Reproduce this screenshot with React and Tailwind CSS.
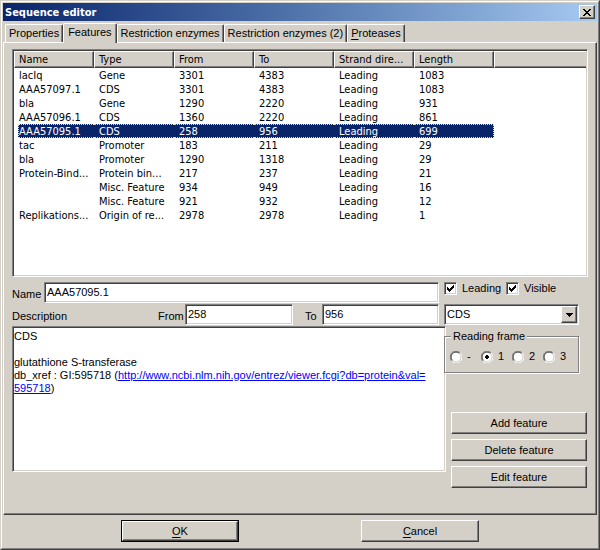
import { useState } from 'react'
import clsx from 'clsx'

const TABS = [
  { id: 'properties', label: 'Properties' },
  { id: 'features', label: 'Features' },
  { id: 'enzymes', label: 'Restriction enzymes' },
  { id: 'enzymes2', label: 'Restriction enzymes (2)' },
  { id: 'proteases', label: 'Proteases', hotkey: true },
]

const COLUMNS = ['Name', 'Type', 'From', 'To', 'Strand dire...', 'Length']

const FEATURES = [
  ['lacIq', 'Gene', '3301', '4383', 'Leading', '1083'],
  ['AAA57097.1', 'CDS', '3301', '4383', 'Leading', '1083'],
  ['bla', 'Gene', '1290', '2220', 'Leading', '931'],
  ['AAA57096.1', 'CDS', '1360', '2220', 'Leading', '861'],
  ['AAA57095.1', 'CDS', '258', '956', 'Leading', '699'],
  ['tac', 'Promoter', '183', '211', 'Leading', '29'],
  ['bla', 'Promoter', '1290', '1318', 'Leading', '29'],
  ['Protein-Bind...', 'Protein bin...', '217', '237', 'Leading', '21'],
  ['', 'Misc. Feature', '934', '949', 'Leading', '16'],
  ['', 'Misc. Feature', '921', '932', 'Leading', '12'],
  ['Replikations...', 'Origin of re...', '2978', '2978', 'Leading', '1'],
]

const raised =
  'border border-t-white border-l-white border-r-[#404040] border-b-[#404040] shadow-[inset_-1px_-1px_0_#808080]'
const sunken =
  'border border-t-[#808080] border-l-[#808080] border-r-white border-b-white bg-white'
const sunkenField =
  'w-full h-[21px] appearance-none rounded-none outline-none pl-[2px] pb-px shadow-[inset_1px_1px_0_#404040,inset_-1px_-1px_0_#d4d0c8]'

function Hotkey({ text }) {
  return (
    <>
      <span className="underline underline-offset-2">{text[0]}</span>
      {text.slice(1)}
    </>
  )
}

function PushButton({ children, className = 'h-[22px]' }) {
  return (
    <button type="button" className={clsx('bg-[#d4d0c8] text-center', raised, className)}>
      {children}
    </button>
  )
}

function TitleBar() {
  return (
    <header className="flex h-[18px] items-center justify-between bg-linear-to-r from-[#0a246a] to-[#a6caf0] px-[2px]">
      <h1 className="font-['DejaVu_Sans_Condensed','Noto_Sans',sans-serif] text-[11px] font-bold text-white">
        Sequence editor
      </h1>
      <button
        type="button"
        aria-label="Close"
        className={clsx('flex h-[14px] w-4 items-center justify-center bg-[#d4d0c8]', raised)}
      >
        <svg width="8" height="7" viewBox="0 0 8 7" shapeRendering="crispEdges" fill="black">
          <path d="M0 0h2v1h1v1h2v-1h1v-1h2v1h-1v1h-1v1h-1v1h1v1h1v1h1v1h-2v-1h-1v-1h-2v1h-1v1h-2v-1h1v-1h1v-1h1v-1h-1v-1h-1v-1h-1z" />
        </svg>
      </button>
    </header>
  )
}

function TabBar({ active, onSelect }) {
  return (
    <div role="tablist" className="flex h-[21px] items-end pl-[2px]">
      {TABS.map((t) => (
        <button
          key={t.id}
          type="button"
          role="tab"
          aria-selected={t.id === active}
          onClick={() => onSelect(t.id)}
          className={clsx(
            'rounded-t-[2px] border border-b-0 border-t-white border-l-white border-r-[#404040] bg-[#d4d0c8] shadow-[inset_-1px_0_0_#808080]',
            t.id === active ? 'relative z-10 -mb-px h-5 px-1 pb-[3px]' : 'h-[18px] px-[3px]',
          )}
        >
          {t.hotkey ? <Hotkey text={t.label} /> : t.label}
        </button>
      ))}
    </div>
  )
}

function FeatureList({ selected, onSelect }) {
  return (
    <div className={clsx('flex-1 p-px shadow-[inset_1px_1px_0_#404040,inset_-1px_-1px_0_#d4d0c8]', sunken)}>
      <table className="w-full table-fixed border-separate border-spacing-0 font-['DejaVu_Sans_Condensed','Noto_Sans',sans-serif] text-[11px] leading-[14px]">
        <thead>
          <tr>
            {COLUMNS.map((c) => (
              <th
                key={c}
                scope="col"
                className={clsx('h-[17px] w-20 bg-[#d4d0c8] pl-1 text-left font-normal whitespace-nowrap', raised)}
              >
                {c}
              </th>
            ))}
            <td className="border-t border-b border-l border-t-white border-l-white border-b-[#404040] bg-[#d4d0c8] shadow-[inset_0_-1px_0_#808080]" />
          </tr>
        </thead>
        <tbody>
          {FEATURES.map((row, i) => (
            <tr key={i} aria-selected={i === selected} onClick={() => onSelect(i)}>
              {row.map((cell, j) => (
                <td key={j} className={j === 0 ? 'pl-1' : ''}>
                  <div
                    className={clsx(
                      'h-[14px] whitespace-nowrap',
                      j > 0 && 'pl-[5px]',
                      j === 0 && i !== selected && 'pl-px',
                      i === selected
                        ? 'border-y border-dotted border-[#f5db95] bg-[#0a246a] leading-[14px] text-white'
                        : 'leading-4',
                      i === selected && j === 0 && 'border-l',
                      i === selected && j === row.length - 1 && 'border-r',
                    )}
                  >
                    {cell}
                  </div>
                </td>
              ))}
            </tr>
          ))}
        </tbody>
      </table>
    </div>
  )
}

function CheckBox({ label }) {
  return (
    <label className="flex w-[62px] items-center gap-[5px]">
      <span className="relative flex">
        <input
          type="checkbox"
          defaultChecked
          className={clsx(
            'peer size-[13px] appearance-none shadow-[inset_1px_1px_0_#404040,inset_-1px_-1px_0_#d4d0c8]',
            sunken,
          )}
        />
        <svg
          className="pointer-events-none absolute top-[3px] left-[3px] hidden peer-checked:block"
          width="7"
          height="7"
          viewBox="0 0 7 7"
          shapeRendering="crispEdges"
        >
          <path d="M0 2h1v1h1v1h1v-1h1v-1h1v-1h1v-1h1v3h-1v1h-1v1h-1v1h-1v1h-1v-1h-1v-1h-1z" />
        </svg>
      </span>
      {label}
    </label>
  )
}

function FrameRadio({ value, defaultChecked }) {
  return (
    <label className="flex w-[31px] items-center gap-[5px]">
      <span className="relative flex">
        <input type="radio" name="frame" defaultChecked={defaultChecked} className="peer size-3 appearance-none" />
        <svg
          className="pointer-events-none absolute inset-0 [&_.dot]:hidden peer-checked:[&_.dot]:block"
          width="12"
          height="12"
          viewBox="0 0 12 12"
        >
          <circle cx="6" cy="6" r="5" fill="white" />
          <path d="M1.8 10.2A5.5 5.5 0 0 1 10.2 1.8" fill="none" stroke="#808080" />
          <path d="M2.5 9.5A4.5 4.5 0 0 1 9.5 2.5" fill="none" stroke="#404040" />
          <path d="M10.2 1.8A5.5 5.5 0 0 1 1.8 10.2" fill="none" stroke="white" />
          <path d="M9.5 2.5A4.5 4.5 0 0 1 2.5 9.5" fill="none" stroke="#d4d0c8" />
          <path className="dot" d="M5 4h2v1h1v2h-1v1h-2v-1h-1v-2h1z" />
        </svg>
      </span>
      {value}
    </label>
  )
}

export default function App() {
  const [tab, setTab] = useState('features')
  const [selected, setSelected] = useState(4)

  return (
    <div className="min-h-screen border border-t-[#d4d0c8] border-r-[#404040] border-b-[#404040] border-l-[#d4d0c8] bg-[#d4d0c8] font-['Liberation_Sans',Arial,sans-serif] text-[11px] leading-[13px] text-black flex flex-col">
      <div className="flex flex-1 flex-col border border-t-white border-r-[#808080] border-b-[#808080] border-l-white p-px">
        <TitleBar />
        <TabBar active={tab} onSelect={setTab} />

        <main className={clsx('flex flex-1 flex-col px-2 pt-[6px] pb-[42px]', raised)}>
          <FeatureList selected={selected} onSelect={setSelected} />

          <div className="mt-[5px] flex">
            <section className="min-w-0 flex-1">
              <div className="mr-[5px] flex items-center">
                <label htmlFor="name" className="w-8 shrink-0 pt-1">
                  Name
                </label>
                <input id="name" defaultValue="AAA57095.1" className={clsx(sunken, sunkenField)} />
              </div>
              <div className="mt-px mr-[5px] flex items-center">
                <span id="description-label" className="w-[146px] shrink-0 pt-1">
                  Description
                </span>
                <label htmlFor="from" className="w-[27px] shrink-0 pt-1">
                  From
                </label>
                <div className="flex-[12]">
                  <input id="from" defaultValue="258" className={clsx(sunken, sunkenField)} />
                </div>
                <label htmlFor="to" className="w-[29px] shrink-0 pt-1 pl-3">
                  To
                </label>
                <div className="flex-[13]">
                  <input id="to" defaultValue="956" className={clsx(sunken, sunkenField)} />
                </div>
              </div>
              <div
                role="document"
                aria-labelledby="description-label"
                className={clsx(
                  'mt-px -mr-[2px] h-[146px] pt-[3px] pl-px shadow-[inset_1px_1px_0_#404040,inset_-1px_-1px_0_#d4d0c8]',
                  sunken,
                )}
              >
                <p>CDS</p>
                <p className="mt-[13px]">glutathione S-transferase</p>
                <p>
                  db_xref : GI:595718 (
                  <a
                    href="http://www.ncbi.nlm.nih.gov/entrez/viewer.fcgi?db=protein&val=595718"
                    className="text-[#0000ff] underline"
                  >
                    http://www.ncbi.nlm.nih.gov/entrez/viewer.fcgi?db=protein&val=
                    <br />
                    595718
                  </a>
                  )
                </p>
              </div>
            </section>

            <aside className="relative flex w-36 shrink-0 flex-col">
              <div className="flex">
                <CheckBox label="Leading" />
                <CheckBox label="Visible" />
              </div>
              <div className="relative mt-[9px] mr-[9px]">
                <select
                  aria-label="Feature type"
                  defaultValue="CDS"
                  className={clsx(sunken, sunkenField)}
                >
                  <option>CDS</option>
                  <option>Gene</option>
                  <option>Promoter</option>
                </select>
                <span
                  className={clsx(
                    'pointer-events-none absolute top-[2px] right-[2px] flex h-[17px] w-4 items-center justify-center bg-[#d4d0c8]',
                    raised,
                  )}
                >
                  <svg width="7" height="4" viewBox="0 0 7 4" shapeRendering="crispEdges">
                    <path d="M0 0h7v1h-1v1h-1v1h-1v1h-1v-1h-1v-1h-1v-1h-1z" />
                  </svg>
                </span>
              </div>
              <fieldset className="mt-[5px] mr-[9px] h-[43px] border border-[#808080] bg-[#d4d0c8] pl-[5px] shadow-[1px_1px_0_white,inset_1px_1px_0_white]">
                <legend className="ml-px bg-[#d4d0c8] px-[2px]">Reading frame</legend>
                <div className="flex pt-[7px]">
                  <FrameRadio value="-" />
                  <FrameRadio value="1" defaultChecked />
                  <FrameRadio value="2" />
                  <FrameRadio value="3" />
                </div>
              </fieldset>
              <div className="mt-auto mr-px mb-[-16px] ml-[7px] flex flex-col gap-[5px]">
                <PushButton>Add feature</PushButton>
                <PushButton>Delete feature</PushButton>
                <PushButton>Edit feature</PushButton>
              </div>
            </aside>
          </div>
        </main>

        <footer className="flex justify-around px-[57px] pt-[5px] pb-[5px]">
          <div className="flex border border-black">
            <PushButton className="h-5 w-[116px]">
              <Hotkey text="OK" />
            </PushButton>
          </div>
          <PushButton className="h-[22px] w-[118px]">
            <Hotkey text="Cancel" />
          </PushButton>
        </footer>
      </div>
    </div>
  )
}
